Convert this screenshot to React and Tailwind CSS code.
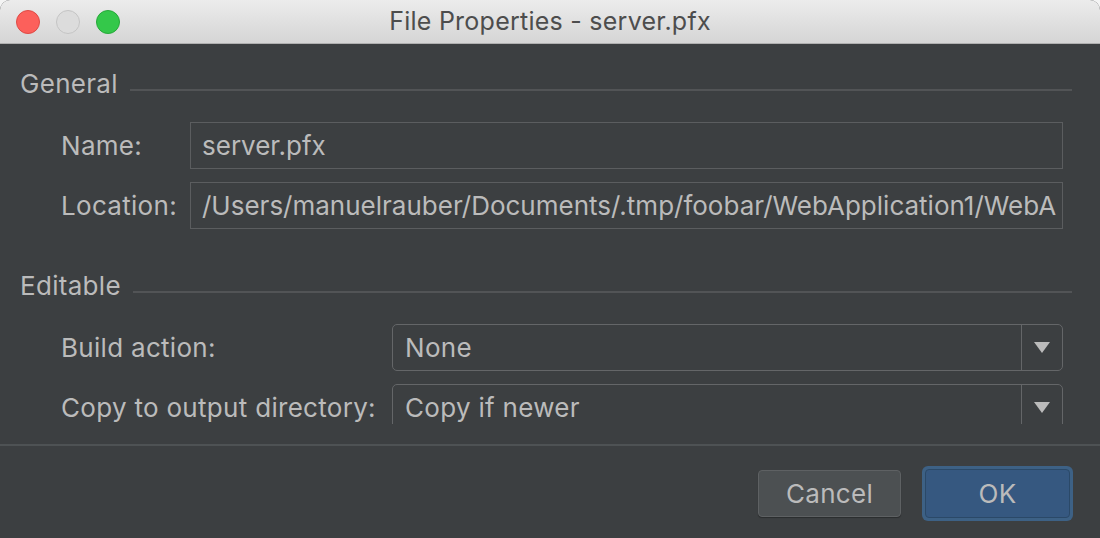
import React from "react";

const txt = "text-[26px] tracking-[0.3px] text-[#bbbbbb]";

function Light({ color, border }) {
  return <span className={`w-[24px] h-[24px] rounded-full border ${color} ${border}`} />;
}

function SectionHeader({ title }) {
  return (
    <div className="flex items-center h-[38px]">
      <span className={txt}>{title}</span>
      <div className="flex-1 h-[2px] bg-[#525456] ml-[12px] mt-[14px]" />
    </div>
  );
}

function Field({ label, value }) {
  return (
    <div className="flex items-center h-[47px] pl-[41px]">
      <span className={`w-[129px] shrink-0 ${txt}`}>{label}</span>
      <div className="flex-1 min-w-0 h-full border border-[#5b5d5f] flex items-center pl-[11px] pr-[6px]">
        <div className="min-w-0 overflow-hidden whitespace-nowrap">
          <span className="text-[26px] tracking-normal text-[#bbbbbb]">{value}</span>
        </div>
      </div>
    </div>
  );
}

function Combo({ label, value }) {
  return (
    <div className="flex items-center h-[47px] pl-[41px]">
      <span className={`w-[331px] shrink-0 ${txt}`}>{label}</span>
      <div className="flex-1 min-w-0 h-full border border-[#646668] rounded-[5px] flex">
        <div className="flex-1 flex items-center pl-[12px]">
          <span className={txt}>{value}</span>
        </div>
        <div className="w-[41px] border-l border-[#646668] flex items-center justify-center">
          <svg width="16" height="11" viewBox="0 0 16 11">
            <path d="M0 0 H16 L8 11 Z" fill="#bbbbbb" />
          </svg>
        </div>
      </div>
    </div>
  );
}

export default function App() {
  return (
    <div className="w-[1100px] h-[538px] bg-[#f4f4f4] overflow-hidden" style={{ fontFamily: "Inter, 'Liberation Sans', sans-serif" }}>
      <div className="w-full h-full rounded-t-[10px] overflow-hidden flex flex-col bg-[#3c3f41]">
        {/* title bar */}
        <div className="h-[44px] shrink-0 bg-gradient-to-b from-[#ececec] to-[#d5d5d5] border-b border-[#b0b0b0] relative flex items-center justify-center">
          <div className="absolute left-[16px] top-[10px] flex gap-[16px]">
            <Light color="bg-[#fc605b]" border="border-[#de4a45]" />
            <Light color="bg-[#dcdcdc]" border="border-[#c4c4c4]" />
            <Light color="bg-[#34c84a]" border="border-[#27a83a]" />
          </div>
          <span className="text-[25px] tracking-[0.25px] text-[#4d4d4d]">File Properties - server.pfx</span>
        </div>

        {/* content */}
        <div className="h-[380px] shrink-0 overflow-hidden pl-[20px] pr-[37px] pt-[20px]">
          <div className="mr-[-9px]">
            <SectionHeader title="General" />
          </div>
          <div className="mt-[20px]">
            <Field label="Name:" value="server.pfx" />
          </div>
          <div className="mt-[13px]">
            <Field
              label="Location:"
              value="/Users/manuelrauber/Documents/.tmp/foobar/WebApplication1/WebA"
            />
          </div>
          <div className="mt-[37px] mr-[-9px]">
            <SectionHeader title="Editable" />
          </div>
          <div className="mt-[20px]">
            <Combo label="Build action:" value="None" />
          </div>
          <div className="mt-[13px]">
            <Combo label="Copy to output directory:" value="Copy if newer" />
          </div>
        </div>

        {/* footer */}
        <div className="mt-[20px] h-[2px] bg-[#4e5254]" />
        <div className="flex-1 flex justify-end items-start pt-[20px] pr-[27px] gap-[21px]">
          <button className="mt-[4px] w-[143px] h-[47px] bg-[#4c5052] border border-[#5e6163] rounded-[4px] text-[26px] tracking-[0.3px] text-[#bbbbbb] shadow-[0_1px_1px_rgba(0,0,0,0.3)]">
            Cancel
          </button>
          <div className="p-[3px] rounded-[6px] bg-[#3d6185]">
            <button className="w-[145px] h-[49px] bg-[#365880] border border-[#2b4968] rounded-[4px] text-[26px] tracking-[0.3px] text-[#bbbbbb]">
              OK
            </button>
          </div>
        </div>
      </div>
    </div>
  );
}
